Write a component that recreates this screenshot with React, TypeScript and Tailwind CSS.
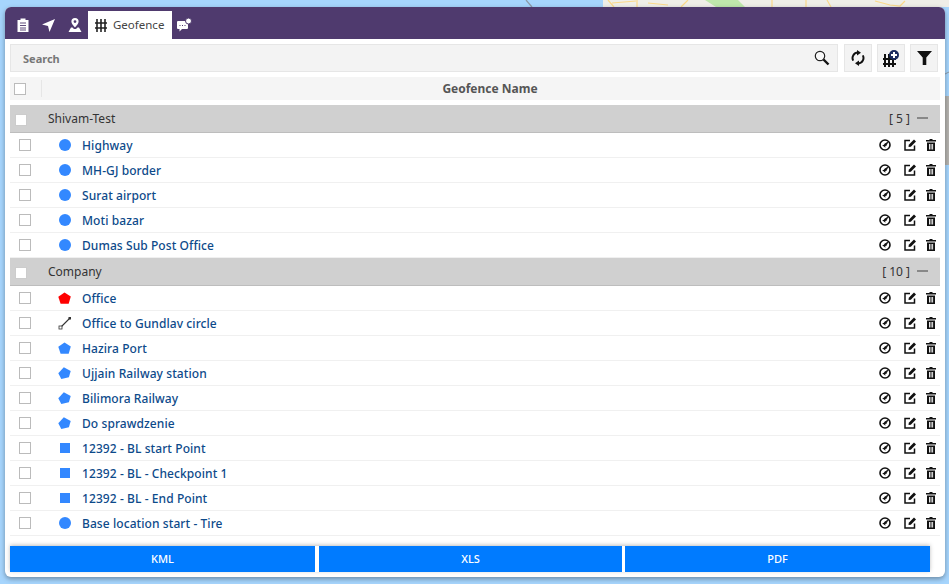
type Row = { name: string; shape: "circle" | "pentagon" | "tilted" | "redPentagon" | "line" | "square" };

const groups: { name: string; count: string; rows: Row[] }[] = [
  {
    name: "Shivam-Test",
    count: "[ 5 ]",
    rows: [
      { name: "Highway", shape: "circle" },
      { name: "MH-GJ border", shape: "circle" },
      { name: "Surat airport", shape: "circle" },
      { name: "Moti bazar", shape: "circle" },
      { name: "Dumas Sub Post Office", shape: "circle" },
    ],
  },
  {
    name: "Company",
    count: "[ 10 ]",
    rows: [
      { name: "Office", shape: "redPentagon" },
      { name: "Office to Gundlav circle", shape: "line" },
      { name: "Hazira Port", shape: "pentagon" },
      { name: "Ujjain Railway station", shape: "tilted" },
      { name: "Bilimora Railway", shape: "tilted" },
      { name: "Do sprawdzenie", shape: "tilted" },
      { name: "12392 - BL start Point", shape: "square" },
      { name: "12392 - BL - Checkpoint 1", shape: "square" },
      { name: "12392 - BL - End Point", shape: "square" },
      { name: "Base location start - Tire", shape: "circle" },
    ],
  },
];

const ShapeIcon = ({ shape }: { shape: Row["shape"] }) => {
  if (shape === "circle") return <div className="w-3 h-3 rounded-full bg-[#3388ff]" />;
  if (shape === "square") return <div className="w-[10px] h-[10px] bg-[#3388ff]" />;
  if (shape === "line")
    return (
      <svg width="14" height="14" viewBox="0 0 14 14" className="shrink-0">
        <path d="M2.500 11.500L11.500 2.500" stroke="#333" strokeWidth="1.100" />
        <rect x="1" y="10" width="3" height="3" fill="#fff" stroke="#333" strokeWidth="0.800" />
        <rect x="10.500" y="1" width="2.500" height="2.500" fill="#333" />
      </svg>
    );
  if (shape === "tilted")
    return (
      <svg width="13" height="13" viewBox="0 0 13 13">
        <path d="M5.800 0.300L12.700 4L10.900 10.200L3.300 12L0.300 6.300Z" fill="#3388ff" />
      </svg>
    );
  return (
    <svg width="13" height="13" viewBox="0 0 13 13">
      <path d="M6.500 0.500L12.800 4.500L10.700 11.800H2.600L0.300 4.800Z" fill={shape === "redPentagon" ? "#ff0000" : "#3388ff"} />
    </svg>
  );
};

const ReportIcon = () => (
  <svg width="12" height="14" viewBox="0 0 12 14" fill="#fff">
    <path d="M0.500 2h3V0.500h5V2h3v12h-11Z" />
    <path d="M3 5h6M3 7.500h6M3 10h6M3 12h6" stroke="#4f3a6e" strokeWidth="0.900" />
  </svg>
);

const NavIcon = () => (
  <svg width="13" height="13" viewBox="0 0 13 13" fill="#fff">
    <path d="M13 0L7.500 13L6 7L0 5.500Z" />
  </svg>
);

const PinIcon = () => (
  <svg width="14" height="14" viewBox="0 0 14 14" fill="#fff">
    <path fillRule="evenodd" d="M7 0a3.600 3.600 0 0 1 3.600 3.600C10.600 6 7 9.500 7 9.500S3.400 6 3.400 3.600A3.600 3.600 0 0 1 7 0Zm0 2.200a1.400 1.400 0 1 0 0 2.800 1.400 1.400 0 0 0 0-2.800Z" />
    <path d="M3 9.500h1.500L6 11h2l1.500-1.500H11l2.500 4.500H.5Z" />
  </svg>
);

const ChatIcon = () => (
  <svg width="15" height="14" viewBox="0 0 15 14" fill="#fff">
    <path d="M0 4a1 1 0 0 1 1-1h9a1 1 0 0 1 1 1v6a1 1 0 0 1-1 1H5l-2.500 2.500V11H1a1 1 0 0 1-1-1Z" />
    <circle cx="11.500" cy="3" r="3" stroke="#4f3a6e" />
    <path d="M2.500 7.500h1M5 7.500h1M7.500 7.500h1" stroke="#4f3a6e" />
  </svg>
);

const GridIcon = () => (
  <svg width="12" height="13" viewBox="0 0 12 13">
    <path d="M2 0v13M6 0v13M10 0v13M0 4h12M0 9h12" stroke="#222" strokeWidth="1.600" />
  </svg>
);

const MagnifierIcon = () => (
  <svg width="16" height="16" viewBox="0 0 16 16" fill="none">
    <circle cx="6" cy="6" r="4.700" fill="#f8f8f8" stroke="#222" strokeWidth="1.200" />
    <path d="M9.500 9.500L14.500 14.500" stroke="#111" strokeWidth="2.400" />
  </svg>
);

const SyncIcon = () => (
  <svg width="14" height="16" viewBox="0 0 14 16" fill="#111">
    <path d="M7 2.500A5.500 5.500 0 0 0 2.200 10.600" fill="none" stroke="#111" strokeWidth="2" />
    <path d="M7 13.500A5.500 5.500 0 0 0 11.800 5.400" fill="none" stroke="#111" strokeWidth="2" />
    <path d="M6 0L10 2.800L6 5.500Z" />
    <path d="M8 16L4 13.200L8 10.500Z" />
  </svg>
);

const FenceAddIcon = () => (
  <svg width="17" height="17" viewBox="0 0 17 17">
    <path d="M2 4v13M6 4v13M10 4v13M0 9h13M0 14h13" stroke="#111" strokeWidth="2" />
    <circle cx="11" cy="5" r="5" fill="#1a2a5e" />
    <path d="M11 2v6M8 5h6" stroke="#fff" strokeWidth="2" />
  </svg>
);

const FunnelIcon = () => (
  <svg width="15" height="14" viewBox="0 0 15 14" fill="#111">
    <path d="M0 0h15L9.300 6.500V14H5.700V6.500Z" />
  </svg>
);

const TargetIcon = () => (
  <svg width="12" height="12" viewBox="0 0 12 12" fill="none">
    <circle cx="6" cy="6" r="5" stroke="#111" strokeWidth="1.600" />
    <path d="M9 3L6.800 7L5.300 5.300Z" fill="#111" stroke="#111" strokeWidth="0.800" />
    <path d="M3.200 6.200L6 5.500L6.500 8.700Z" fill="#111" />
  </svg>
);

const EditIcon = () => (
  <svg width="13" height="12" viewBox="0 0 13 12" fill="none">
    <path d="M6 1.500H1V11H10.500V6.500" stroke="#111" strokeWidth="1.500" />
    <path d="M4.500 8L4.800 5.700L10 0.500L12 2.500L6.800 7.700Z" fill="#111" />
  </svg>
);

const TrashIcon = () => (
  <svg width="10" height="12" viewBox="0 0 10 12" fill="#111">
    <path d="M3.500 0h3v1H10v1.500H0V1h3.500Z" />
    <path fillRule="evenodd" d="M1 3.500h8V12H1ZM3 5v5.500h.9V5ZM4.600 5v5.500h.9V5ZM6.200 5v5.500h.9V5Z" />
  </svg>
);

const MapBackdrop = () => (
  <svg width="949" height="584" viewBox="0 0 949 584" className="absolute left-0 top-0">
    <path d="M603 0H949V7H603Z" fill="#efeee8" />
    <path d="M705 0H738L745 7H716Z" fill="#bfe8ac" />
    <path d="M526 0L532 7" stroke="#8d99a6" strokeWidth="1.200" />
    <path d="M608 0L614 7M636 1L612 3M637 0V7M648 3L668 5M688 0L681 7M772 7V0M806 0V7M827 0L831 7M875 1L890 5L900 6L905 1" stroke="#fbd98a" strokeWidth="1.200" fill="none" />
    <path d="M945 96H949V165H945Z" fill="#b4b2ae" />
    <path d="M945 74L949 72" stroke="#8d99a6" />
  </svg>
);

const App = () => {
  return (
    <div className="relative w-[949px] h-[584px] overflow-hidden bg-[#a6d5fd] pt-[7px] px-[5px] font-['Noto_Sans',sans-serif]">
      <MapBackdrop />
      <div className="relative w-[940px] h-[570px] rounded-[6px] bg-white shadow-[0_2px_5px_rgba(0,0,0,0.35)] overflow-hidden">
        <div className="h-8 bg-[#4f3a6e] flex items-end pl-[12px]">
          <div className="h-7 w-[25px] flex items-center"><ReportIcon /></div>
          <div className="h-7 w-[26px] flex items-center"><NavIcon /></div>
          <div className="h-7 w-[20px] flex items-center"><PinIcon /></div>
          <div className="h-7 w-[84px] bg-white flex items-center pl-[7px] gap-[6px] text-[11.5px] text-[#444]">
            <GridIcon />
            Geofence
          </div>
          <div className="h-7 pl-[5px] flex items-center"><ChatIcon /></div>
        </div>

        <div className="flex mt-[5px] ml-[5px] h-7">
          <div className="w-[828px] flex items-center justify-between bg-[#f3f3f3] border border-[#e6e6e6] pl-[12px] pr-[7px]">
            <span className="text-[11px] font-bold text-[#777] mt-[2px]">Search</span>
            <MagnifierIcon />
          </div>
          <div className="ml-[6px] w-7 flex items-center justify-center bg-[#f3f3f3] border border-[#e6e6e6]">
            <SyncIcon />
          </div>
          <div className="ml-[5px] w-7 flex items-center justify-center bg-[#f3f3f3] border border-[#e6e6e6]">
            <FenceAddIcon />
          </div>
          <div className="ml-[5px] w-7 flex items-center justify-center bg-[#f3f3f3] border border-[#e6e6e6]">
            <FunnelIcon />
          </div>
        </div>

        <div className="mx-[5px] mt-[5px] h-[23px] bg-[#f5f5f5] flex items-center">
          <div className="w-[32px] h-[17px] flex items-center pl-1 border-r border-[#e6e6e6]">
            <div className="w-3 h-3 bg-white border border-[#bbb]" />
          </div>
          <div className="flex-1 text-center text-xs font-bold text-[#555] pr-[2px]">Geofence Name</div>
        </div>

        <div className="mx-[5px] mt-[5px]">
          {groups.map((group) => (
            <div key={group.name}>
              <div className="h-7 bg-[#d0d0d0] border-b border-[#bdbdbd] flex items-center pl-[5px] pr-[12px]">
                <div className="w-3 h-3 bg-white border border-[#ccc] mt-[3px]" />
                <span className="ml-[21px] text-xs text-[#333]">{group.name}</span>
                <span className="ml-auto text-xs text-[#333]">{group.count}</span>
                <div className="ml-[7px] w-[11px] h-[2px] bg-[#888] mb-[2px]" />
              </div>
              {group.rows.map((row) => (
                <div key={row.name} className="h-[25px] border-b border-[#f0f0f0] flex items-center pl-[9px] pr-[4px]">
                  <div className="w-3 h-3 bg-white border border-[#bbb]" />
                  <div className="w-[13px] ml-[27px] flex items-center justify-center">
                    <ShapeIcon shape={row.shape} />
                  </div>
                  <span className="ml-[11px] mt-[2px] text-xs font-medium tracking-[0.08px] text-[#0d4a8a]">{row.name}</span>
                  <div className="ml-auto flex items-center">
                    <TargetIcon />
                    <div className="ml-[13px]"><EditIcon /></div>
                    <div className="ml-[9px]"><TrashIcon /></div>
                  </div>
                </div>
              ))}
            </div>
          ))}
        </div>

        <div className="absolute left-[5px] top-[539px] w-[920px] h-[26px] flex shadow-[0_-1px_4px_rgba(0,0,0,0.25)]">
          <div className="w-[305px] bg-[#007bff] flex items-center justify-center text-[11px] font-medium text-white">KML</div>
          <div className="ml-[4px] w-[303px] bg-[#007bff] flex items-center justify-center text-[11px] font-medium text-white">XLS</div>
          <div className="ml-[3px] w-[305px] bg-[#007bff] flex items-center justify-center text-[11px] font-medium text-white">PDF</div>
        </div>
      </div>
    </div>
  );
};

export default App;
